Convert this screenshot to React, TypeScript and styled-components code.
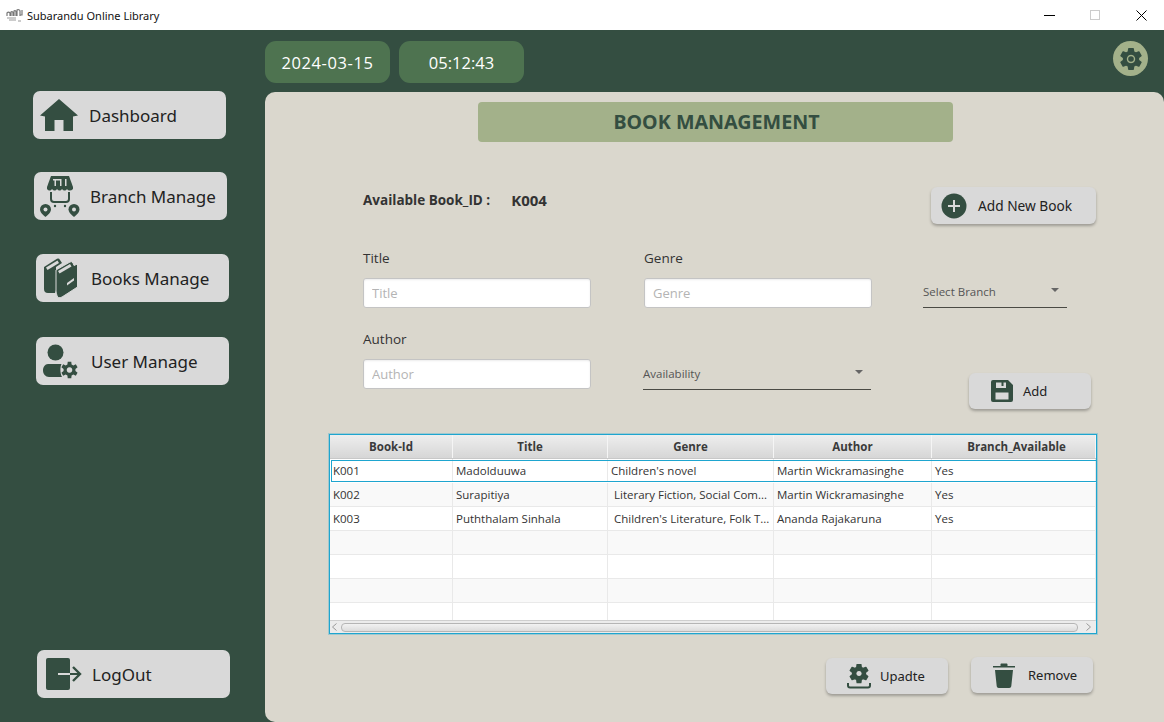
import React from 'react';
import styled, {createGlobalStyle} from 'styled-components';

const GlobalStyle = createGlobalStyle`
    html, body {
        margin: 0;
        padding: 0;
        overflow: hidden;
        background: #344e41;
    }
    * {
        box-sizing: border-box;
    }
`;

const Window = styled.div`
    width: 1164px;
    height: 722px;
    display: flex;
    flex-direction: column;
    font-family: "Noto Sans", "Open Sans", sans-serif;
`;

const TitleBar = styled.div`
    height: 30px;
    flex: none;
    background: #fff;
    display: flex;
    align-items: center;
    padding-left: 6px;
    font-size: 11px;
    color: #111;
`;

const AppName = styled.span`
    margin-left: 4px;
    flex: 1;
`;

const WindowButton = styled.div`
    width: 46px;
    height: 30px;
    display: flex;
    align-items: center;
    justify-content: center;
`;

const Body = styled.div`
    flex: 1;
    display: flex;
    min-height: 0;
`;

const Sidebar = styled.nav`
    width: 265px;
    flex: none;
    display: flex;
    flex-direction: column;
    padding: 61px 0 24px;
`;

const NavButton = styled.button<{$left: number; $top?: number; $end?: boolean}>`
    width: 193px;
    height: 48px;
    flex: none;
    margin-left: ${p => p.$left}px;
    margin-top: ${p => (p.$end ? 'auto' : `${p.$top ?? 0}px`)};
    border: 0;
    border-radius: 7px;
    background: #d9d9d9;
    display: flex;
    align-items: center;
    padding: 0;
    font-family: inherit;
    font-size: 17px;
    color: #222;
`;

const NavIcon = styled.span<{$pad: number; $width: number}>`
    width: ${p => p.$width}px;
    height: 48px;
    flex: none;
    display: flex;
    align-items: center;
    padding-left: ${p => p.$pad}px;
    color: #344e41;
`;

const Content = styled.main`
    flex: 1;
    display: flex;
    flex-direction: column;
    min-width: 0;
`;

const TopBar = styled.div`
    height: 62px;
    flex: none;
    display: flex;
    align-items: flex-start;
    gap: 9px;
    padding: 11px 16px 0 0;
`;

const ClockPill = styled.div<{$spread?: number}>`
    width: 125px;
    height: 42px;
    border-radius: 11px;
    background: #4e7350;
    color: #fff;
    display: flex;
    align-items: center;
    justify-content: center;
    font-family: "Open Sans", sans-serif;
    font-size: 16.5px;
    letter-spacing: ${p => p.$spread ?? 0}px;
`;

const SettingsButton = styled.div`
    margin-left: auto;
    width: 35px;
    height: 35px;
    border-radius: 50%;
    background: #a3b18a;
    display: flex;
    align-items: center;
    justify-content: center;
    color: #344e41;
`;

const Panel = styled.section`
    flex: 1;
    background: #dad7cd;
    border-radius: 10px 10px 0 10px;
    display: flex;
    flex-direction: column;
    padding-top: 10px;
`;

const Heading = styled.h1`
    width: 475px;
    height: 40px;
    margin: 0 0 0 213px;
    flex: none;
    background: #a3b18a;
    border-radius: 4px;
    display: flex;
    align-items: center;
    justify-content: center;
    padding: 0 0 2px 2px;
    font-family: "Noto Sans", sans-serif;
    font-size: 19.7px;
    font-weight: 700;
    color: #344e41;
`;

const Form = styled.div`
    margin: 45px 0 0 98px;
    display: grid;
    grid-template-columns: 281px 279px 174px;
    grid-template-rows: 40px auto auto auto auto;
`;

const BookIdRow = styled.div`
    grid-column: 1 / 3;
    display: flex;
    align-items: center;
    height: 26px;
    color: #333;
    font-family: "Open Sans", sans-serif;
    font-weight: 700;
    font-size: 13.5px;
`;

const BookIdValue = styled.span`
    margin-left: 21px;
    font-size: 15px;
`;

const FieldLabel = styled.label`
    height: 20px;
    margin: 21px 0 10px;
    font-family: "Open Sans", sans-serif;
    font-size: 13.5px;
    line-height: 20px;
    color: #333;
`;

const TextInput = styled.input`
    width: 228px;
    height: 30px;
    border: 1px solid #c4c4c4;
    border-radius: 3px;
    background: #fff;
    box-shadow: inset 0 1px 2px rgba(0, 0, 0, 0.08);
    padding: 0 8px;
    font-family: "Open Sans", sans-serif;
    font-size: 13px;
    outline: none;
    &::placeholder {
        color: #b4b4b4;
    }
`;

const Dropdown = styled.div<{$width: number; $left?: number; $top?: number}>`
    width: ${p => p.$width}px;
    height: 30px;
    margin-left: ${p => p.$left ?? 0}px;
    margin-top: ${p => p.$top ?? 0}px;
    border-bottom: 1px solid #4a4a44;
    display: flex;
    align-items: center;
    justify-content: space-between;
    padding: 0 8px 3px 0;
    font-family: "Open Sans", sans-serif;
    font-size: 11.5px;
    color: #555;
`;

const Caret = styled.span`
    width: 0;
    height: 0;
    border-left: 4.5px solid transparent;
    border-right: 4.5px solid transparent;
    border-top: 4.5px solid #666;
    margin-bottom: 2px;
`;

const ActionButton = styled.button<{$width: number; $height: number; $left?: number; $top?: number; $pad: number; $gap: number; $font?: number}>`
    width: ${p => p.$width}px;
    height: ${p => p.$height}px;
    margin-left: ${p => p.$left ?? 0}px;
    margin-top: ${p => p.$top ?? 0}px;
    flex: none;
    border: 0;
    border-radius: 6px;
    background: #d9d9d9;
    box-shadow: 0 2px 3px rgba(0, 0, 0, 0.28);
    display: flex;
    align-items: center;
    gap: ${p => p.$gap}px;
    padding: 0 0 0 ${p => p.$pad}px;
    font-family: "Noto Sans", sans-serif;
    font-size: ${p => p.$font ?? 13}px;
    color: #222;
`;

const ActionIcon = styled.span`
    display: flex;
    color: #344e41;
`;

const COLUMNS = '123px 155px 166px 158px 164px';

const TableFrame = styled.div`
    width: 768px;
    height: 200px;
    margin: 25px 0 0 64px;
    flex: none;
    border: 1px solid #1ea5cf;
    box-shadow: 0 0 0 1px rgba(30, 165, 207, 0.3);
    background: #fff;
    font-family: "Open Sans", sans-serif;
    font-size: 11.5px;
    color: #333;
`;

const HeaderRow = styled.div`
    height: 24px;
    display: grid;
    grid-template-columns: ${COLUMNS};
    background: linear-gradient(#eeeeee, #d6d6d6);
    border-bottom: 1px solid #c8c8c8;
`;

const HeaderCell = styled.div`
    display: flex;
    align-items: center;
    justify-content: center;
    border-right: 1px solid #f5f5f5;
    font-weight: 700;
    font-size: 11.5px;
    color: #3a3a3a;
    &:last-child {
        padding-left: 6px;
    }
`;

const RowsArea = styled.div`
    height: 161px;
    overflow: hidden;
`;

const Row = styled.div<{$striped: boolean; $selected?: boolean}>`
    position: relative;
    height: 24px;
    display: grid;
    grid-template-columns: ${COLUMNS};
    background: ${p => (p.$striped ? '#f9f9f9' : '#fff')};
    border-bottom: 1px solid #e9e9e9;

    ${p =>
        p.$selected &&
        `
        background: #fff;
        border-bottom-color: #fff;
        &::after {
            content: '';
            position: absolute;
            inset: 1px 0 0 1px;
            border: 1px solid #1ea5cf;
            border-right: 0;
        }
    `}
`;

const Cell = styled.div`
    display: flex;
    align-items: center;
    padding-left: 3px;
    border-right: 1px solid #e9e9e9;
    white-space: pre;
    overflow: hidden;
`;

const ScrollBar = styled.div`
    height: 13px;
    display: flex;
    align-items: center;
    background: #ececec;
    border-top: 1px solid #cfcfcf;
    padding: 0 4px 0 2px;
    gap: 3px;
`;

const ScrollArrow = styled.span`
    width: 6px;
    flex: none;
    display: flex;
    color: #999;
`;

const ScrollThumb = styled.div`
    flex: 1;
    height: 9px;
    margin-right: 5px;
    border: 1px solid #b5b5b5;
    border-radius: 4px;
    background: linear-gradient(#f2f2f2, #dcdcdc);
`;

const Footer = styled.div`
    display: flex;
    align-items: flex-start;
    margin: 23px 0 0 561px;
`;

// computed gear outline, used for every cog in the picture
const gearPath = (cx: number, cy: number, outer: number, inner: number, teeth: number) => {
    const pts: string[] = [];
    const step = (Math.PI * 2) / teeth;
    for (let i = 0; i < teeth; i++) {
        const a = i * step - Math.PI / 2;
        const w = step * 0.2;
        const list: [number, number][] = [
            [inner, a - step * 0.34],
            [outer, a - w],
            [outer, a + w],
            [inner, a + step * 0.34],
        ];
        list.forEach(([r, t]) => pts.push(`${(cx + r * Math.cos(t)).toFixed(2)} ${(cy + r * Math.sin(t)).toFixed(2)}`));
    }
    return `M${pts.join('L')}Z`;
};

const HomeIcon = () => (
    <svg width="38" height="32" viewBox="0 0 38 32" fill="currentColor">
        <path d="M19 0 38 16.500 33 17.500V32H23.500V21H14.500V32H5V17.500L0 16.500Z" />
    </svg>
);

const BranchIcon = () => (
    <svg width="40" height="42" viewBox="0 0 40 42" fill="currentColor">
        <path d="M11 1H29L33 12H7Z" />
        <path d="M7 12h26v2c-2 2-4.500 2-6 0-1.500 2-3.500 2-5 0-1.500 2-3.500 2-5 0-1.500 2-3.500 2-5 0-1.500 2-3.500 2-5 0Z" />
        <path d="M13 4h7v1.500h-7ZM14.500 5h1.500v6h-1.500ZM20 4h1.500v7H20ZM25 4h1.500v7H25Z" fill="#d9d9d9" />
        <path d="M11 17v7c0 2 1.500 3 3 3h12c1.500 0 3-1 3-3v-7" fill="none" stroke="currentColor" strokeWidth="2" />
        <circle cx="15" cy="31" r="1.200" />
        <circle cx="25" cy="31" r="1.200" />
        <path d="M5.500 29a5.500 5.500 0 0 1 5.500 5.500C11 38 5.500 42 5.500 42S0 38 0 34.500A5.500 5.500 0 0 1 5.500 29Z" />
        <path d="M34 29a5.500 5.500 0 0 1 5.500 5.500C39.500 38 34 42 34 42s-5.500-4-5.500-7.500A5.500 5.500 0 0 1 34 29Z" />
        <circle cx="5.500" cy="34.500" r="2" fill="#d9d9d9" />
        <circle cx="34" cy="34.500" r="2" fill="#d9d9d9" />
    </svg>
);

const BooksIcon = () => (
    <svg width="34" height="41" viewBox="0 0 34 41" fill="currentColor">
        <path d="M0 9 13 .8Q15 0 16 2L18 5 12 9V32L11 35H4Q0 35 0 31Z" />
        <path d="M2 9.500 13.500 2.500 15 5 3.500 12Z" fill="#d9d9d9" />
        <path
            stroke="#d9d9d9"
            strokeWidth="1"
            d="M12 12 26 4Q28 3 29 5L30 7.500 33.500 6V29L18 39Q14 41 13 37.500 12 35 12 33Z"
        />
        <path d="M14 13 26 6 27.500 8.500 15.500 15.500Z" fill="#d9d9d9" />
        <path d="M23 25 30 20V22.500L23 27.500Z" fill="#d9d9d9" />
    </svg>
);

const UserGearIcon = () => (
    <svg width="35" height="35" viewBox="0 0 35 35" fill="currentColor">
        <circle cx="12.500" cy="8.500" r="8" />
        <path d="M5 20h13.500c-1.500 3-1.500 9 .5 13H6c-3.500 0-6-3-6-6.500S2 20 5 20Z" />
        <path fillRule="evenodd" d={`${gearPath(26.5, 26, 8.5, 6, 6)}M26.500 23.200a2.800 2.800 0 1 0 .01 0Z`} />
    </svg>
);

const LogoutIcon = () => (
    <svg width="36" height="32" viewBox="0 0 36 32" fill="currentColor">
        <rect x="0" y="0" width="24" height="32" rx="2" />
        <path d="M12 15h12v2H12Z" fill="#d9d9d9" />
        <path d="M24 15h10v2H24Z" />
        <path d="M27 9l7 7-7 7" fill="none" stroke="currentColor" strokeWidth="2.400" />
    </svg>
);

const CogIcon = ({size}: {size: number}) => (
    <svg width={size} height={size} viewBox="0 0 24 24" fill="currentColor">
        <path
            fillRule="evenodd"
            stroke="currentColor"
            strokeWidth="1.500"
            strokeLinejoin="round"
            d={`${gearPath(12, 12, 10.5, 7.5, 6)}M12 7a5 5 0 1 0 .01 0Z`}
        />
        <circle cx="12" cy="12" r="2.800" />
    </svg>
);

const PlusCircleIcon = () => (
    <svg width="26" height="26" viewBox="0 0 26 26">
        <circle cx="13" cy="13" r="12.500" fill="currentColor" />
        <path d="M13 7v12M7 13h12" stroke="#d9d9d9" strokeWidth="2" />
    </svg>
);

const SaveIcon = () => (
    <svg width="22" height="22" viewBox="0 0 22 22" fill="currentColor">
        <path
            fillRule="evenodd"
            d="M2 0H17L22 5V20a2 2 0 0 1-2 2H2a2 2 0 0 1-2-2V2A2 2 0 0 1 2 0ZM5 2.500V8H15V2.500H12.500V6H10.500V2.500ZM4.500 12.500V19.500H17.500V12.500Z"
        />
    </svg>
);

const UploadGearIcon = () => (
    <svg width="24" height="25" viewBox="0 0 24 25" fill="currentColor">
        <path
            fillRule="evenodd"
            stroke="currentColor"
            strokeWidth="1.200"
            strokeLinejoin="round"
            d={`${gearPath(12, 9.5, 9.3, 6.6, 6)}M12 6.300a3.200 3.200 0 1 0 .01 0Z`}
        />
        <path d="M1 19v2.500c0 1 1 2 2 2h18c1 0 2-1 2-2V19" fill="none" stroke="currentColor" strokeWidth="2" />
    </svg>
);

const TrashIcon = () => (
    <svg width="22" height="25" viewBox="0 0 22 25" fill="currentColor">
        <path d="M0 3h7.500V1.500C7.500.7 8 .5 8.500.5h5c.5 0 1 .2 1 1V3H22v1.500H0Z" />
        <path d="M2 7H20L18.300 23c-.1 1-1 2-2 2H5.700c-1 0-1.900-1-2-2Z" />
    </svg>
);

const AppLogo = () => (
    <svg width="17" height="15" viewBox="0 0 17 15" fill="none" stroke="#777" strokeWidth="1.200">
        <path d="M1 8V5c1-1 2-1 3 0v3M5 8V4c1-1 2 0 2 1v3M8 8V3c1-1 2 0 2 1v4M11 8V2c1-1 3 0 3 1v5M14 7h2V2" />
        <path d="M1 10h9M3 12h7M12 13h3" stroke="#999" />
    </svg>
);

const headers = ['Book-Id', 'Title', 'Genre', 'Author', 'Branch_Available'];

const rows: string[][] = [
    ['K001', 'Madolduuwa', "Children's novel", 'Martin Wickramasinghe', 'Yes'],
    ['K002', 'Surapitiya', ' Literary Fiction, Social Com...', 'Martin Wickramasinghe', 'Yes'],
    ['K003', 'Puththalam Sinhala', " Children's Literature, Folk T...", 'Ananda Rajakaruna', 'Yes'],
    ['', '', '', '', ''],
    ['', '', '', '', ''],
    ['', '', '', '', ''],
    ['', '', '', '', ''],
];

export const App: React.FC = () => {
    return (
        <Window>
            <GlobalStyle />
            <TitleBar>
                <AppLogo />
                <AppName>Subarandu Online Library</AppName>
                <WindowButton>
                    <svg width="11" height="1"><rect width="11" height="1" fill="#000" /></svg>
                </WindowButton>
                <WindowButton>
                    <svg width="10" height="10"><rect x=".5" y=".5" width="9" height="9" fill="none" stroke="#ccc" /></svg>
                </WindowButton>
                <WindowButton>
                    <svg width="11" height="11"><path d="M.5.5l10 10M10.500.5l-10 10" stroke="#000" /></svg>
                </WindowButton>
            </TitleBar>
            <Body>
                <Sidebar>
                    <NavButton $left={33}>
                        <NavIcon $pad={7} $width={56}><HomeIcon /></NavIcon>
                        Dashboard
                    </NavButton>
                    <NavButton $left={34} $top={33}>
                        <NavIcon $pad={6} $width={56}><BranchIcon /></NavIcon>
                        Branch Manage
                    </NavButton>
                    <NavButton $left={36} $top={34}>
                        <NavIcon $pad={8} $width={55}><BooksIcon /></NavIcon>
                        Books Manage
                    </NavButton>
                    <NavButton $left={36} $top={35}>
                        <NavIcon $pad={7} $width={55}><UserGearIcon /></NavIcon>
                        User Manage
                    </NavButton>
                    <NavButton $left={37} $end>
                        <NavIcon $pad={9} $width={55}><LogoutIcon /></NavIcon>
                        LogOut
                    </NavButton>
                </Sidebar>
                <Content>
                    <TopBar>
                        <ClockPill $spread={0.6}>2024-03-15</ClockPill>
                        <ClockPill>05:12:43</ClockPill>
                        <SettingsButton><CogIcon size={24} /></SettingsButton>
                    </TopBar>
                    <Panel>
                        <Heading>BOOK MANAGEMENT</Heading>
                        <Form>
                            <BookIdRow>
                                Available Book_ID :
                                <BookIdValue>K004</BookIdValue>
                            </BookIdRow>
                            <ActionButton $width={165} $height={37} $left={8} $pad={10} $gap={11} $font={13.7}>
                                <ActionIcon><PlusCircleIcon /></ActionIcon>
                                Add New Book
                            </ActionButton>

                            <FieldLabel>Title</FieldLabel>
                            <FieldLabel>Genre</FieldLabel>
                            <span />

                            <TextInput placeholder="Title" />
                            <TextInput placeholder="Genre" />
                            <Dropdown $width={144}>Select Branch<Caret /></Dropdown>

                            <FieldLabel>Author</FieldLabel>
                            <span />
                            <span />

                            <TextInput placeholder="Author" />
                            <Dropdown $width={228} $left={-1} $top={1}>Availability<Caret /></Dropdown>
                            <ActionButton $width={122} $height={36} $left={46} $top={14} $pad={22} $gap={10}>
                                <ActionIcon><SaveIcon /></ActionIcon>
                                Add
                            </ActionButton>
                        </Form>
                        <TableFrame>
                            <HeaderRow>
                                {headers.map(h => <HeaderCell key={h}>{h}</HeaderCell>)}
                            </HeaderRow>
                            <RowsArea>
                                {rows.map((row, i) => (
                                    <Row key={i} $striped={i % 2 === 1} $selected={i === 0}>
                                        {row.map((text, j) => <Cell key={j}>{text}</Cell>)}
                                    </Row>
                                ))}
                            </RowsArea>
                            <ScrollBar>
                                <ScrollArrow>
                                    <svg width="5" height="8"><path d="M4.500.5l-4 3.500 4 3.500" fill="none" stroke="currentColor" /></svg>
                                </ScrollArrow>
                                <ScrollThumb />
                                <ScrollArrow>
                                    <svg width="5" height="8"><path d="M.5.5l4 3.500-4 3.500" fill="none" stroke="currentColor" /></svg>
                                </ScrollArrow>
                            </ScrollBar>
                        </TableFrame>
                        <Footer>
                            <ActionButton $width={122} $height={36} $top={1} $pad={21} $gap={9}>
                                <ActionIcon><UploadGearIcon /></ActionIcon>
                                Upadte
                            </ActionButton>
                            <ActionButton $width={122} $height={36} $left={23} $pad={22} $gap={13}>
                                <ActionIcon><TrashIcon /></ActionIcon>
                                Remove
                            </ActionButton>
                        </Footer>
                    </Panel>
                </Content>
            </Body>
        </Window>
    );
};

export default App;
